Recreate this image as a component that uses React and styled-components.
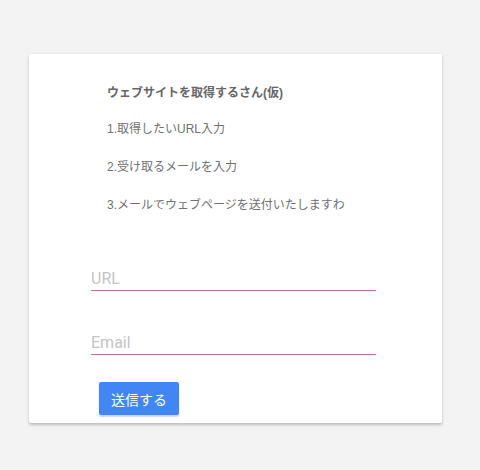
import React from 'react';
import styled, { createGlobalStyle } from 'styled-components';

const GlobalStyle = createGlobalStyle`
    html, body {
        margin: 0;
        padding: 0;
        background-color: #f3f3f3;
        font-family: "Liberation Sans", Arial, "Noto Sans CJK JP", sans-serif;
    }
`;

const Page = styled.div`
    width: 480px;
    height: 470px;
    padding-top: 54px;
    padding-left: 29px;
    box-sizing: border-box;
`;

const Card = styled.div`
    width: 413px;
    height: 369px;
    box-sizing: border-box;
    background-color: white;
    border-radius: 2px;
    box-shadow: 0 2px 3px rgba(0, 0, 0, 0.22), 0 0 2px rgba(0, 0, 0, 0.06);
    padding-top: 29px;
    display: flex;
    flex-direction: column;
`;

const Intro = styled.div`
    padding-left: 78px;
    display: flex;
    flex-direction: column;
`;

const Title = styled.div`
    font-size: 12px;
    line-height: 20px;
    font-weight: bold;
    color: #666;
    margin-bottom: 16px;
`;

const Step = styled.div`
    font-size: 12px;
    line-height: 20px;
    color: #707070;
    margin-bottom: ${props => props.last ? '0' : '18px'};
`;

const Form = styled.form`
    margin-top: 51px;
    padding-left: 62px;
    display: flex;
    flex-direction: column;
`;

const Field = styled.input`
    width: 285px;
    height: 24px;
    box-sizing: content-box;
    padding: 0;
    margin: 0 0 39px 0;
    border: none;
    border-bottom: 1px solid #c8679a;
    outline: none;
    background: transparent;
    font-family: Roboto, "Liberation Sans", sans-serif;
    font-size: 16px;
    color: #444;

    &::placeholder {
        color: #c4c4c4;
    }
`;

const SubmitButton = styled.button`
    align-self: flex-start;
    margin-left: 8px;
    margin-top: -12px;
    width: 80px;
    height: 33px;
    border: none;
    border-radius: 2px;
    background-color: #4285f4;
    color: white;
    font-family: "Liberation Sans", Arial, "Noto Sans CJK JP", sans-serif;
    font-size: 14px;
    box-shadow: 0 2px 2px rgba(0, 0, 0, 0.18);
    cursor: pointer;
`;

export default function App() {
    return (
        <Page>
            <GlobalStyle/>
            <Card>
                <Intro>
                    <Title>ウェブサイトを取得するさん(仮)</Title>
                    <Step>1.取得したいURL入力</Step>
                    <Step>2.受け取るメールを入力</Step>
                    <Step last>3.メールでウェブページを送付いたしますわ</Step>
                </Intro>
                <Form onSubmit={(e) => e.preventDefault()}>
                    <Field type="text" placeholder="URL"/>
                    <Field type="email" placeholder="Email"/>
                    <SubmitButton type="submit">送信する</SubmitButton>
                </Form>
            </Card>
        </Page>
    );
}
